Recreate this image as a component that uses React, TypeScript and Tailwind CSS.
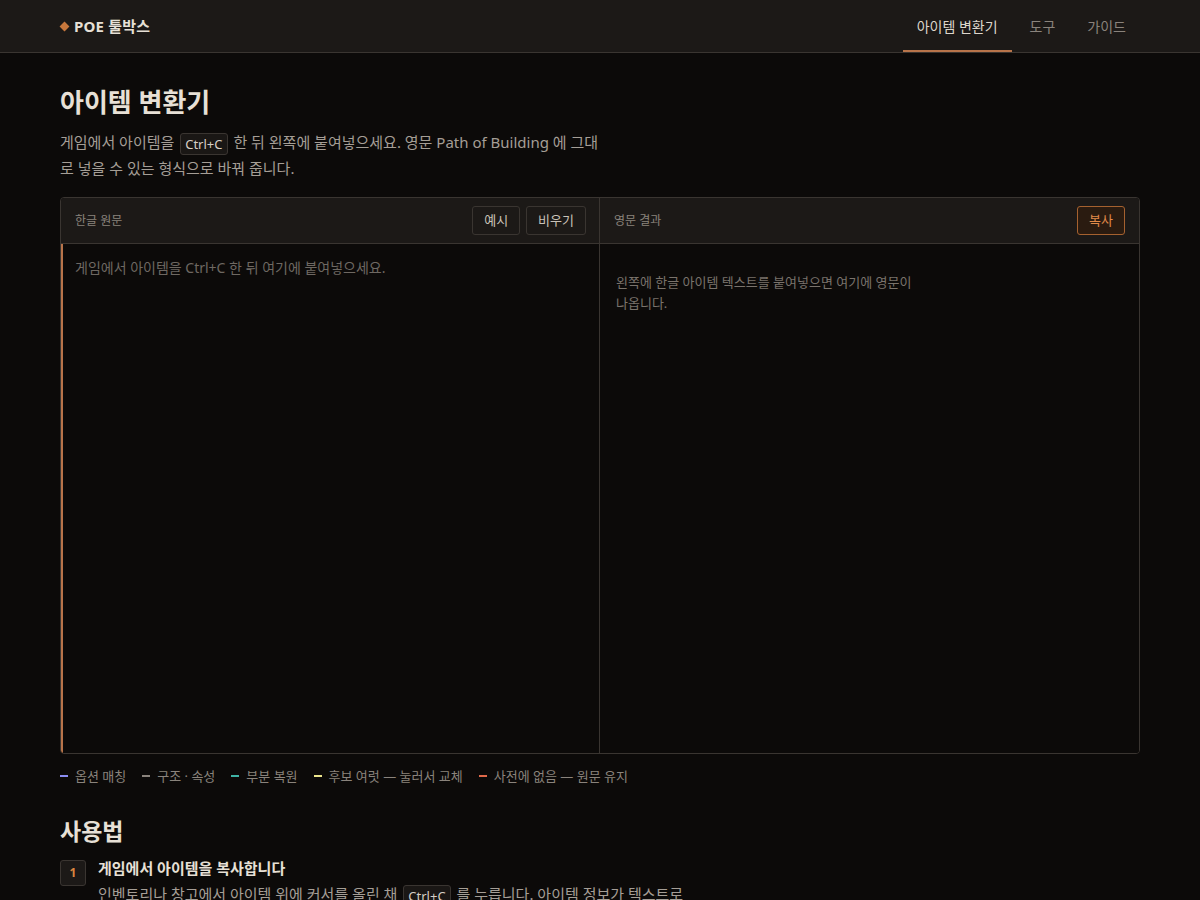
import React, { useState } from 'react';

const FONT = { fontFamily: '"Noto Sans", "Noto Sans CJK KR", sans-serif' };

const Kbd: React.FC<{ children: React.ReactNode }> = ({ children }) => (
  <kbd
    className="mx-0.5 inline-block rounded-[3px] border border-[#3a3531] bg-[#1a1715] px-1 text-[13px] leading-[20px] text-[#d6cfc6] align-middle"
    style={FONT}
  >
    {children}
  </kbd>
);

const legend = [
  { color: 'bg-[#8b8df2]', label: '옵션 매칭' },
  { color: 'bg-[#8a837c]', label: '구조 · 속성' },
  { color: 'bg-[#3fb3a6]', label: '부분 복원' },
  { color: 'bg-[#ece58c]', label: '후보 여럿 — 눌러서 교체' },
  { color: 'bg-[#e0694a]', label: '사전에 없음 — 원문 유지' },
];

const App: React.FC = () => {
  const [input, setInput] = useState('');

  return (
    <div className="min-h-screen bg-[#0c0a09] text-[#e7e0d6]" style={FONT}>
      <header className="h-[53px] border-b border-[#3a3531] bg-[#1c1917]">
        <div className="mx-auto flex h-full max-w-[1080px] items-center justify-between">
          <div className="flex items-center gap-[6px] pl-[1px]">
            <span className="block h-[7px] w-[7px] rotate-45 bg-[#c7773c]" />
            <span className="text-[15px] font-bold tracking-[0.2px] text-[#e7e0d6]">POE 툴박스</span>
          </div>
          <nav className="flex h-full items-stretch gap-1">
            <a className="flex items-center border-b-2 border-[#b8744a] px-[14px] pt-[2px] text-[14px] text-[#ddd6cc]">
              아이템 변환기
            </a>
            <a className="flex items-center px-[14px] text-[14px] text-[#8a837c]">도구</a>
            <a className="flex items-center px-[14px] text-[14px] text-[#8a837c]">가이드</a>
          </nav>
        </div>
      </header>

      <main className="mx-auto max-w-[1080px] pt-[29px]">
        <h1 className="text-[26px] font-bold leading-[40px] text-[#e7e0d6]">아이템 변환기</h1>
        <p className="mt-[7px] max-w-[545px] text-[15px] leading-[26px] text-[#a59e96]">
          게임에서 아이템을 <Kbd>Ctrl+C</Kbd> 한 뒤 왼쪽에 붙여넣으세요. 영문 Path of Building 에 그대로 넣을 수 있는 형식으로 바꿔 줍니다.
        </p>

        <div className="mt-[16px] grid h-[557px] grid-cols-2 overflow-hidden rounded-[4px] border border-[#3a3531]">
          <section className="flex flex-col border-r border-[#3a3531]">
            <div className="flex h-[46px] shrink-0 items-center justify-between border-b border-[#3a3531] bg-[#1c1917] pl-[14px] pr-[13px]">
              <span className="text-[12px] text-[#8a837c]">한글 원문</span>
              <div className="flex gap-[6px]">
                <button className="h-[29px] rounded-[3px] border border-[#3a3531] px-[11px] text-[13px] text-[#c9c2b8]">예시</button>
                <button className="h-[29px] rounded-[3px] border border-[#3a3531] px-[11px] text-[13px] text-[#c9c2b8]">비우기</button>
              </div>
            </div>
            <textarea
              value={input}
              onChange={(e) => setInput(e.target.value)}
              placeholder="게임에서 아이템을 Ctrl+C 한 뒤 여기에 붙여넣으세요."
              className="flex-1 resize-none border-l-2 border-[#b8744a] bg-[#0c0a09] px-[12px] py-[13px] text-[14px] leading-[21px] text-[#d6cfc6] outline-none placeholder:text-[#6e6862]"
              style={FONT}
            />
          </section>
          <section className="flex flex-col">
            <div className="flex h-[46px] shrink-0 items-center justify-between border-b border-[#3a3531] bg-[#1c1917] pl-[14px] pr-[14px]">
              <span className="text-[12px] text-[#8a837c]">영문 결과</span>
              <button className="h-[29px] rounded-[3px] border border-[#a5612f] bg-[#2a1b10] px-[11px] text-[13px] text-[#e08a4a]">복사</button>
            </div>
            <div className="flex-1 bg-[#0c0a09] px-[16px] pt-[28px]">
              <p className="max-w-[310px] text-[13px] leading-[21px] text-[#7a736c]">
                왼쪽에 한글 아이템 텍스트를 붙여넣으면 여기에 영문이 나옵니다.
              </p>
            </div>
          </section>
        </div>

        <div className="mt-[12px] flex flex-wrap items-center gap-x-[16px] text-[13px] leading-[20px] text-[#8a837c]">
          {legend.map((l) => (
            <span key={l.label} className="flex items-center gap-[7px]">
              <span className={`block h-[2px] w-[8px] ${l.color}`} />
              {l.label}
            </span>
          ))}
        </div>

        <h2 className="mt-[29px] text-[23px] font-bold leading-[32px] text-[#e7e0d6]">사용법</h2>
        <ol className="mt-[10px]">
          <li className="flex gap-[12px]">
            <span className="mt-[3px] flex h-[26px] w-[26px] shrink-0 items-center justify-center rounded-[3px] border border-[#3a3531] bg-[#1c1917] text-[12px] font-bold text-[#d9853f]">
              1
            </span>
            <div>
              <div className="text-[15px] font-bold leading-[22px] text-[#e7e0d6]">게임에서 아이템을 복사합니다</div>
              <p className="mt-[2px] max-w-[600px] text-[15px] leading-[26px] text-[#a59e96]">
                인벤토리나 창고에서 아이템 위에 커서를 올린 채 <Kbd>Ctrl+C</Kbd> 를 누릅니다. 아이템 정보가 텍스트로 복사됩니다.
              </p>
            </div>
          </li>
        </ol>
        <div className="h-[60px]" />
      </main>
    </div>
  );
};

export default App;
